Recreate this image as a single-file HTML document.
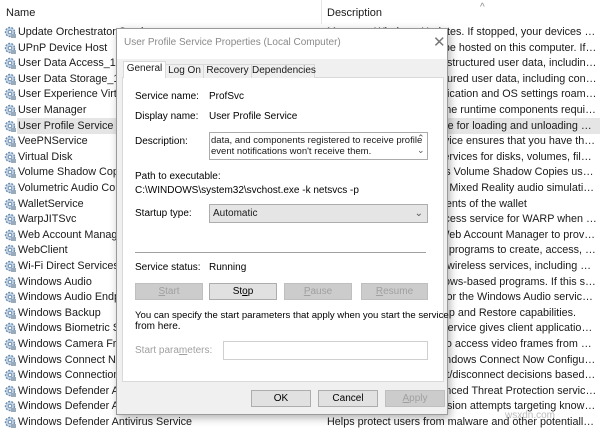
<!DOCTYPE html>
<html><head><meta charset="utf-8"><style>
*{margin:0;padding:0;box-sizing:border-box}
body{width:600px;height:431px;overflow:hidden;background:#fff;position:relative;font-family:"Liberation Sans",sans-serif;color:#1a1a1a}
.a{position:absolute;white-space:nowrap}
.row{position:absolute;left:0;width:600px;height:16px;font-size:10.8px;line-height:16px;white-space:nowrap}
.row .n{position:absolute;left:18px}
.row .d{position:absolute;left:327px;width:270px;overflow:hidden;text-overflow:ellipsis}
.ic{position:absolute;left:4px;top:2px;width:12px;height:12px}
.dl{font-size:10px;color:#000}
.btn{position:absolute;height:17px;border:1px solid #adadad;background:#e1e1e1;font-size:10px;text-align:center;line-height:15px;color:#000}
.dis{color:#a0a0a0;background:#cccccc;border-color:#bfbfbf}
.tab{position:absolute;top:64px;height:14px;border:1px solid #d9d9d9;border-bottom:none;background:#f0f0f0;font-size:10px;line-height:12px;text-align:center;white-space:nowrap}
</style></head><body>
<div class="a" style="left:480px;top:2px;font-size:10px;color:#888">^</div>
<div class="a" style="left:6px;top:7px;font-size:11px">Name</div>
<div class="a" style="left:321px;top:0;width:1px;height:24px;background:#e5e5e5"></div>
<div class="a" style="left:327px;top:7px;font-size:11px">Description</div>
<div class="a" style="left:17px;top:118px;width:583px;height:16px;background:#e5e5e5"></div>
<svg width="0" height="0" style="position:absolute"><defs><g id="g"><circle cx="6" cy="6" r="4.5" fill="#c8d8e8" stroke="#6a8cb0" stroke-width="1.4" stroke-dasharray="2 1.2"/><circle cx="6" cy="6" r="1.8" fill="#fff" stroke="#6a8cb0"/><rect x="7" y="8" width="5" height="4" fill="#9ab"/></g></defs></svg>
<div id="list"></div>
<script>
var r=[["Update Orchestrator Service","Manages Windows Updates. If stopped, your devices will not..."],["UPnP Device Host","Allows UPnP devices to be hosted on this computer. If this s..."],["User Data Access_1ac5","Provides apps access to structured user data, including cont..."],["User Data Storage_1ac5","Handles storage of structured user data, including contact in..."],["User Experience Virtualization","Provides support for application and OS settings roaming"],["User Manager","User Manager provides the runtime components required fo..."],["User Profile Service","This service is responsible for loading and unloading user pr..."],["VeePNService","VeePN Service. This service ensures that you have the la..."],["Virtual Disk","Provides management services for disks, volumes, file syste..."],["Volume Shadow Copy","Manages and implements Volume Shadow Copies used for ..."],["Volumetric Audio Compositor","Hosts spatial analysis for Mixed Reality audio simulation."],["WalletService","Hosts objects used by clients of the wallet"],["WarpJITSvc","Provides a JIT out of process service for WARP when running..."],["Web Account Manager","This service is used by Web Account Manager to provide sin..."],["WebClient","Enables Windows-based programs to create, access, and mo..."],["Wi-Fi Direct Services Connection","Manages connections to wireless services, including wireless..."],["Windows Audio","Manages audio for Windows-based programs.  If this service..."],["Windows Audio Endpoint Builder","Manages audio devices for the Windows Audio service.  If th..."],["Windows Backup","Provides Windows Backup and Restore capabilities."],["Windows Biometric Service","The Windows biometric service gives client applications the ..."],["Windows Camera Frame Server","Enables multiple clients to access video frames from camera..."],["Windows Connect Now","WCNCSVC hosts the Windows Connect Now Configuration ..."],["Windows Connection Manager","Makes automatic connect/disconnect decisions based on th..."],["Windows Defender Advanced","Windows Defender Advanced Threat Protection service help..."],["Windows Defender Antivirus Network","Helps guard against intrusion attempts targeting known and..."],["Windows Defender Antivirus Service","Helps protect users from malware and other potentially unw..."]];
var h="";for(var i=0;i<r.length;i++){h+='<div class="row" style="top:'+(24+i*15.6)+'px"><svg class="ic" viewBox="0 0 12 12"><use href="#g"/></svg><span class="n">'+r[i][0]+'</span><span class="d">'+r[i][1]+'</span></div>';}
document.getElementById("list").innerHTML=h;
</script>
<div class="a" style="left:116px;top:28px;width:332px;height:387px;background:#f0f0f0;border:1px solid #9a9a9a;box-shadow:2px 3px 8px rgba(0,0,0,.3)">
<div class="a" style="left:0;top:0;width:330px;height:30px;background:#fff"></div>
<div class="a" style="left:7px;top:8px;font-size:10px;color:#8a8a8a">User Profile Service Properties (Local Computer)</div>
<div class="a" style="left:316px;top:4px;font-size:15px;color:#777">✕</div>
</div>
<div class="a" style="left:122px;top:77px;width:322px;height:305px;background:#fff;border:1px solid #d9d9d9"></div>
<div class="tab" style="left:165px;width:39px">Log On</div>
<div class="tab" style="left:203px;width:49px">Recovery</div>
<div class="tab" style="left:251px;width:64px">Dependencies</div>
<div class="tab" style="left:123px;top:61px;height:17px;width:43px;background:#fff;line-height:14px">General</div>
<div class="a dl" style="left:135px;top:91px">Service name:</div>
<div class="a dl" style="left:209px;top:91px">ProfSvc</div>
<div class="a dl" style="left:135px;top:111px">Display name:</div>
<div class="a dl" style="left:209px;top:111px">User Profile Service</div>
<div class="a dl" style="left:135px;top:136px">Description:</div>
<div class="a" style="left:209px;top:132px;width:219px;height:28px;border:1px solid #ababab;background:#fff;font-size:9.5px;line-height:11px;padding:2px 1px;overflow:hidden">data, and components registered to receive profile<br>event notifications won't receive them.</div>
<div class="a" style="left:417px;top:133px;font-size:9px;color:#555">⌃</div>
<div class="a" style="left:417px;top:145px;font-size:9px;color:#555">⌄</div>
<div class="a dl" style="left:135px;top:171px">Path to executable:</div>
<div class="a dl" style="left:135px;top:185px">C:\WINDOWS\system32\svchost.exe -k netsvcs -p</div>
<div class="a dl" style="left:135px;top:208px">Startup type:</div>
<div class="a" style="left:209px;top:204px;width:219px;height:19px;border:1px solid #adadad;background:#e5e5e5;font-size:10px;line-height:17px;padding-left:3px">Automatic<span style="position:absolute;right:4px;color:#555">⌄</span></div>
<div class="a" style="left:135px;top:252px;width:291px;height:1px;background:#a0a0a0"></div>
<div class="a dl" style="left:135px;top:262px">Service status:</div>
<div class="a dl" style="left:209px;top:262px">Running</div>
<div class="btn dis" style="left:135px;top:283px;width:68px"><u>S</u>tart</div>
<div class="btn" style="left:209px;top:283px;width:68px">St<u>o</u>p</div>
<div class="btn dis" style="left:284px;top:283px;width:68px"><u>P</u>ause</div>
<div class="btn dis" style="left:361px;top:283px;width:67px"><u>R</u>esume</div>
<div class="a dl" style="left:135px;top:310px;font-size:9.6px">You can specify the start parameters that apply when you start the service</div>
<div class="a dl" style="left:135px;top:321px">from here.</div>
<div class="a dl" style="left:135px;top:345px;color:#a0a0a0">Start para<u>m</u>eters:</div>
<div class="a" style="left:223px;top:341px;width:205px;height:19px;border:1px solid #cfcfcf;background:#fff"></div>
<div class="btn" style="left:251px;top:390px;width:60px">OK</div>
<div class="btn" style="left:318px;top:390px;width:60px">Cancel</div>
<div class="btn dis" style="left:385px;top:390px;width:60px"><u>A</u>pply</div>
<div class="a" style="left:505px;top:410px;font-size:10px;color:#bbb">wsxdn.com</div>
</body></html>
